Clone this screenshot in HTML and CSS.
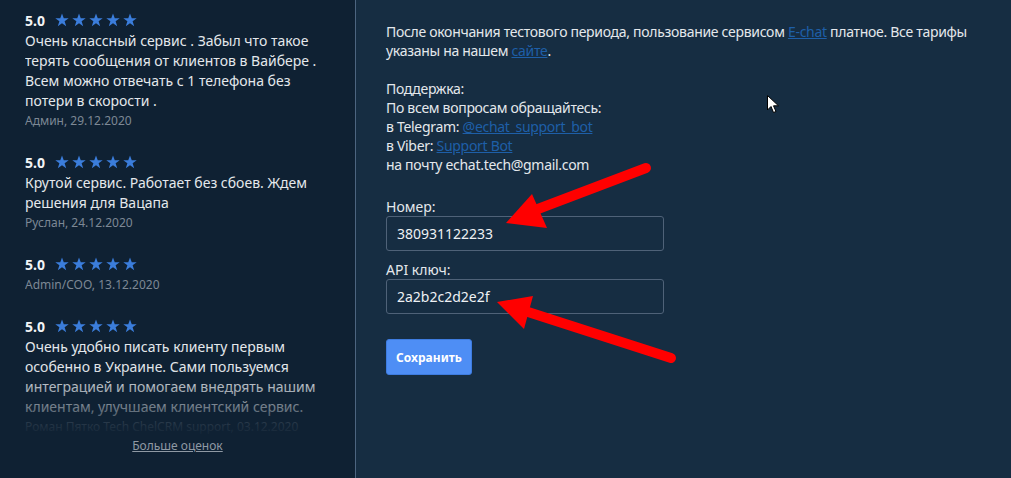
FILE: index.html
```html
<!doctype html>
<html>
<head>
<meta charset="utf-8">
<link rel="stylesheet" href="styles.css">
</head>
<body>

<svg class="defs" width="0" height="0">
	<symbol id="star" viewBox="0 0 24 24">
		<polygon points="12,1 15,9 23.5,9 16.5,14.2 19.2,22.8 12,17.5 4.8,22.8 7.5,14.2 0.5,9 9,9"/>
	</symbol>
</svg>

<div class="page">
	<aside class="reviews">
		<div class="review-list">
			<div class="review">
				<div class="review-head"><b>5.0</b><span class="stars"><svg><use href="#star"/></svg><svg><use href="#star"/></svg><svg><use href="#star"/></svg><svg><use href="#star"/></svg><svg><use href="#star"/></svg></span></div>
				<p class="review-text">Очень классный сервис . Забыл что такое терять сообщения от клиентов в Вайбере . Всем можно отвечать с 1 телефона без потери в скорости .</p>
				<div class="review-author">Админ, 29.12.2020</div>
			</div>
			<div class="review">
				<div class="review-head"><b>5.0</b><span class="stars"><svg><use href="#star"/></svg><svg><use href="#star"/></svg><svg><use href="#star"/></svg><svg><use href="#star"/></svg><svg><use href="#star"/></svg></span></div>
				<p class="review-text">Крутой сервис. Работает без сбоев. Ждем решения для Вацапа</p>
				<div class="review-author">Руслан, 24.12.2020</div>
			</div>
			<div class="review">
				<div class="review-head"><b>5.0</b><span class="stars"><svg><use href="#star"/></svg><svg><use href="#star"/></svg><svg><use href="#star"/></svg><svg><use href="#star"/></svg><svg><use href="#star"/></svg></span></div>
				<div class="review-author">Admin/COO, 13.12.2020</div>
			</div>
			<div class="review">
				<div class="review-head"><b>5.0</b><span class="stars"><svg><use href="#star"/></svg><svg><use href="#star"/></svg><svg><use href="#star"/></svg><svg><use href="#star"/></svg><svg><use href="#star"/></svg></span></div>
				<p class="review-text">Очень удобно писать клиенту первым особенно в Украине. Сами пользуемся интеграцией и помогаем внедрять нашим клиентам, улучшаем клиентский сервис.</p>
				<div class="review-author">Роман Пятко Tech ChelCRM support, 03.12.2020</div>
			</div>
		</div>
		<a class="more" href="#">Больше оценок</a>
	</aside>

	<main class="settings">
		<p>После окончания тестового периода, пользование сервисом <a href="#">E-chat</a> платное. Все тарифы указаны на нашем <a href="#">сайте</a>.</p>
		<p>Поддержка:<br>
		По всем вопросам обращайтесь:<br>
		в Telegram: <a href="#">@echat_support_bot</a><br>
		в Viber: <a href="#">Support Bot</a><br>
		на почту echat.tech@gmail.com</p>

		<form class="settings-form" action="#" method="post">
			<label class="field">
				<span>Номер:</span>
				<input type="text" name="phone" value="380931122233">
			</label>
			<label class="field">
				<span>API ключ:</span>
				<input type="text" name="key" value="2a2b2c2d2e2f">
			</label>
			<button type="submit">Сохранить</button>
		</form>
	</main>
</div>

<!-- red pointers drawn over the form -->
<svg class="marks" width="1011" height="478">
	<g stroke="#f00" stroke-width="10" stroke-linecap="round" fill="#f00">
		<line x1="646" y1="168" x2="530" y2="212"/>
		<line x1="671" y1="358" x2="525" y2="311"/>
	</g>
	<g fill="#f00">
		<polygon points="506,223 532,194 547,228"/>
		<polygon points="497,302 533,296 524,329"/>
	</g>
</svg>

<svg class="cursor" width="13" height="19" viewBox="0 0 13 19">
	<polygon points="0.5,0.5 0.5,15 4,11.5 6.5,17.5 9,16.5 6.5,10.8 11.5,10.8" fill="#fff" stroke="#000" stroke-width="1"/>
</svg>

</body>
</html>
```

FILE: styles.css
```css
body {
	margin: 0;
	background: #162d42;
	color: #e4e8ec;
	font-family: "Noto Sans", "Open Sans", sans-serif;
	font-size: 14px;
}
.defs {
	position: absolute;
}
.page {
	display: flex;
	height: 478px;
	overflow: hidden;
}

/* left column with ratings */
.reviews {
	width: 356px;
	flex: none;
	background: #0f2133;
	border-right: 1px solid #4d6580;
	box-sizing: border-box;
	padding: 9px 0 0 25px;
}
.review-list {
	height: 428px;
	overflow: hidden;
	position: relative;
}
.review-list::after {
	content: "";
	position: absolute;
	left: 0;
	right: 0;
	bottom: 0;
	height: 70px;
	background: linear-gradient(rgba(15, 33, 51, 0), rgba(15, 33, 51, 0.35) 40%, #0f2133 100%);
}
.review {
	margin-bottom: 20px;
	width: 305px;
}
.review-head {
	display: flex;
	align-items: center;
	height: 22px;
	gap: 10px;
}
.review-head b {
	font-size: 14px;
	color: #f2f4f6;
}
.stars {
	display: flex;
	gap: 3px;
}
.stars svg {
	width: 14px;
	height: 14px;
	fill: #3b7ddb;
}
.review-text {
	margin: 0;
	line-height: 20px;
}
.review-author {
	font-size: 12px;
	line-height: 20px;
	color: #7d8895;
}
.more {
	display: block;
	width: 305px;
	text-align: center;
	font-size: 12px;
	line-height: 18px;
	color: #8f99a4;
}

/* right column */
.settings {
	flex: 1;
	padding: 22px 0 0 30px;
	line-height: 19px;
}
.settings p {
	margin: 0 0 19px;
	width: 600px;
	letter-spacing: -0.3px;
}
.settings a {
	color: #1e5fa8;
}
.settings-form {
	margin-top: 24px;
	width: 278px;
}
.field {
	display: block;
	margin-bottom: 10px;
}
.field span {
	display: block;
	line-height: 18px;
}
.field input {
	display: block;
	width: 100%;
	height: 35px;
	box-sizing: border-box;
	padding: 0 10px;
	background: #162d42;
	border: 1px solid #4f6278;
	border-radius: 3px;
	color: #eef1f4;
	font-family: inherit;
	font-size: 14px;
}
.settings-form button {
	margin-top: 15px;
	width: 86px;
	height: 36px;
	background: #4e8ef5;
	border: 1px solid #3e7ce0;
	border-radius: 3px;
	color: #fff;
	font-family: inherit;
	font-size: 12px;
	font-weight: bold;
}

.marks {
	position: absolute;
	left: 0;
	top: 0;
	pointer-events: none;
}
.cursor {
	position: absolute;
	left: 767px;
	top: 95px;
}
```
